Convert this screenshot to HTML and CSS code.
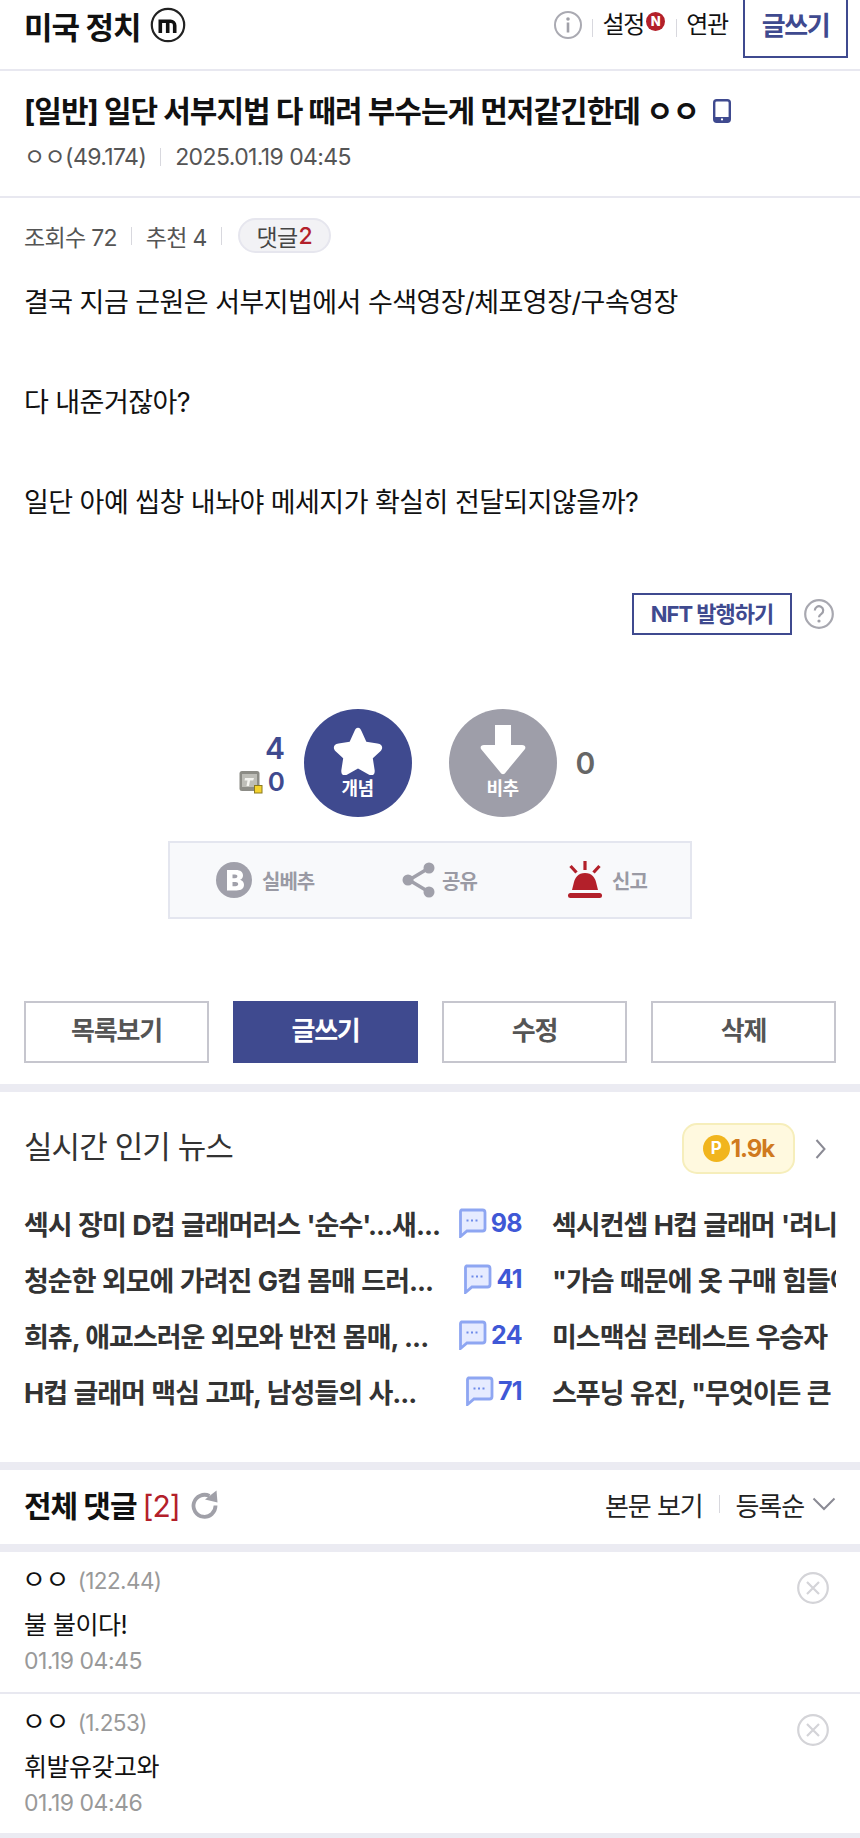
FILE: index.html
```html
<!DOCTYPE html>
<html lang="ko">
<head>
<meta charset="utf-8">
<title>미국 정치</title>
<link rel="stylesheet" href="styles.css">
</head>
<body>
<svg class="defs" aria-hidden="true"><symbol id="bubble" viewBox="0 0 30 30"><path d="M4.500 2h21a2.500 2.500 0 0 1 2.500 2.500v16a2.500 2.500 0 0 1-2.500 2.500H10l-6.500 5.500V4.500a2.500 2.500 0 0 1 1-2.500z" fill="#e6ebff" stroke="#8ea6f2" stroke-width="2.800"/><path d="M9.500 12.500h2M14 12.500h2M18.500 12.500h2" stroke="#6f8bea" stroke-width="2.200"/></symbol></svg>
<header class="top">
  <div class="brand">
    <h1>미국 정치</h1>
    <svg class="m-icon" viewBox="0 0 36 36"><circle cx="18" cy="18" r="16.2" fill="none" stroke="#222" stroke-width="2.200"/><path d="M8.500 12.500h12a6 6 0 0 1 6 6V26h-3.600v-8a2 2 0 0 0-2-2h-1.400v10h-3.600V16h-3.800v10H8.500z" fill="#111"/></svg>
  </div>
  <div class="top-right">
    <svg class="info" viewBox="0 0 28 28"><circle cx="14" cy="14" r="13" fill="none" stroke="#aaaab2" stroke-width="2"/><circle cx="14" cy="8" r="1.8" fill="#a0a0a8"/><rect x="12.700" y="11.500" width="2.600" height="10" fill="#a0a0a8"/></svg>
    <span class="vbar"></span>
    <span class="top-link">설정</span><span class="n-badge">N</span>
    <span class="vbar tight"></span>
    <span class="top-link">연관</span>
    <a class="write-top">글쓰기</a>
  </div>
</header>

<section class="post-head">
  <h2>[일반] 일단 서부지법 다 때려 부수는게 먼저같긴한데 ㅇㅇ
    <svg class="phone" viewBox="0 0 18 24"><rect x="1.200" y="1.200" width="15.600" height="21.600" rx="2.500" fill="none" stroke="#3f4a8f" stroke-width="2.400"/><rect x="1.200" y="18" width="15.600" height="4.800" fill="#3f4a8f"/><circle cx="9" cy="20.400" r="1.100" fill="#fff"/></svg>
  </h2>
  <div class="meta"><span>ㅇㅇ(49.174)</span><i class="sep"></i><span>2025.01.19 04:45</span></div>
</section>

<div class="stats">
  <span>조회수 72</span><i class="sep small"></i><span>추천 4</span><i class="sep small"></i>
  <span class="pill">댓글<b>2</b></span>
</div>

<article class="body-text">
  <p>결국 지금 근원은 서부지법에서 수색영장/체포영장/구속영장</p>
  <p>&nbsp;</p>
  <p>다 내준거잖아?</p>
  <p>&nbsp;</p>
  <p>일단 아예 씹창 내놔야 메세지가 확실히 전달되지않을까?</p>
</article>

<div class="nft-row">
  <a class="nft">NFT 발행하기</a>
  <svg class="help" viewBox="0 0 30 30"><circle cx="15" cy="15" r="13.800" fill="none" stroke="#a8a8b0" stroke-width="2.200"/><path d="M10.800 11.500a4.200 4.200 0 1 1 6.600 3.400c-1.500 1-2.400 1.800-2.400 3.400" fill="none" stroke="#a0a0a8" stroke-width="2.200"/><circle cx="15" cy="22" r="1.600" fill="#a0a0a8"/></svg>
</div>

<div class="vote">
  <div class="vote-left">
    <div class="num-up">4</div>
    <div class="num-fix">
      <svg class="fix-icon" viewBox="0 0 24 24"><rect x="0.500" y="1" width="20" height="20" rx="2.500" fill="#8c8c86"/><rect x="3" y="4" width="15" height="13" fill="#bdbdb7"/><path d="M6 8h9l-.8 2.500H11l-1 5.500H7.500l1-5.500H5.500z" fill="#f4f4f0"/><rect x="15.500" y="15.500" width="7.500" height="7.500" fill="#f4d22e" stroke="#8a7a20" stroke-width="1"/></svg>
      <span>0</span>
    </div>
  </div>
  <button class="circle up">
    <svg viewBox="0 0 56 54"><path d="M28 3c2 0 3 1.500 4 4l5 11 12 2c6 1 6 5 3.500 8l-8.500 8 2 13c.5 5-3 6.500-6.500 4.500L28 47l-11.500 6.500c-3.500 2-7 .5-6.500-4.500l2-13-8.500-8C1 25 1 21 7 20l12-2 5-11c1-2.500 2-4 4-4z" fill="#fff"/></svg>
    <span>개념</span>
  </button>
  <button class="circle down">
    <svg viewBox="0 0 46 50"><path d="M15 0h16v20h11c3 0 4 2 3 4L26 47c-2 3-4 3-6 0L1 24c-1-2 0-4 3-4h11z" fill="#fff"/></svg>
    <span>비추</span>
  </button>
  <div class="vote-right">0</div>
</div>

<div class="actions">
  <div class="action"><svg class="a-b" viewBox="0 0 36 36"><circle cx="18" cy="18" r="18" fill="#a0a0aa"/><path d="M11 8h9c4.500 0 7 2.200 7 5.400 0 2.200-1.200 3.700-3 4.400 2.400.6 4 2.400 4 5 0 3.700-2.800 5.700-7.500 5.700H11zM16.500 12.400v3.800h2.500c1.500 0 2.400-.7 2.400-1.900s-.9-1.900-2.400-1.900zM16.500 20v4.200h3c1.700 0 2.700-.8 2.700-2.100S21.200 20 19.500 20z" fill="#fff" fill-rule="evenodd"/></svg><span>실베추</span></div>
  <div class="action"><svg class="a-s" viewBox="0 0 36 36"><path d="M28 6L8 18l20 12" fill="none" stroke="#a0a0aa" stroke-width="3.500"/><circle cx="28" cy="6" r="5.500" fill="#a0a0aa"/><circle cx="7" cy="18" r="5.500" fill="#a0a0aa"/><circle cx="28" cy="30" r="5.500" fill="#a0a0aa"/></svg><span>공유</span></div>
  <div class="action"><svg class="a-r" viewBox="0 0 36 38"><path d="M18 0v9M3.500 5l6 6.500M32.500 5l-6 6.500" stroke="#b3202a" stroke-width="3.200" fill="none"/><path d="M18 12c7 0 10 5 11 9l2 8H5l2-8c1-4 4-9 11-9z" fill="#b3202a"/><rect x="1" y="32" width="34" height="5" rx="2.500" fill="#b3202a"/></svg><span>신고</span></div>
</div>

<nav class="btns">
  <a class="btn">목록보기</a>
  <a class="btn primary">글쓰기</a>
  <a class="btn">수정</a>
  <a class="btn">삭제</a>
</nav>

<div class="divider"></div>

<section class="news">
  <div class="news-head">
    <h3>실시간 인기 뉴스</h3>
    <div class="news-tools">
      <span class="point"><i>P</i>1.9k</span>
      <svg class="chev" viewBox="0 0 12 22"><path d="M1.500 2l8 9-8 9" fill="none" stroke="#8a8a94" stroke-width="2"/></svg>
    </div>
  </div>
  <ul class="news-grid">
    <li><span class="nt">섹시 장미 D컵 글래머러스 '순수'...새...</span><span class="cm"><svg><use href="#bubble"/></svg>98</span></li>
    <li><span class="nt">섹시컨셉 H컵 글래머 '려니</span></li>
    <li><span class="nt">청순한 외모에 가려진 G컵 몸매 드러...</span><span class="cm"><svg><use href="#bubble"/></svg>41</span></li>
    <li><span class="nt">"가슴 때문에 옷 구매 힘들어</span></li>
    <li><span class="nt">희츄, 애교스러운 외모와 반전 몸매, ...</span><span class="cm"><svg><use href="#bubble"/></svg>24</span></li>
    <li><span class="nt">미스맥심 콘테스트 우승자</span></li>
    <li><span class="nt">H컵 글래머 맥심 고파, 남성들의 사...</span><span class="cm"><svg><use href="#bubble"/></svg>71</span></li>
    <li><span class="nt">스푸닝 유진, "무엇이든 큰</span></li>
  </ul>
</section>

<div class="divider flush"></div>

<section class="cmt-head">
  <div class="cmt-title">
    <h3>전체 댓글 <em>[2]</em></h3>
    <svg class="refresh" viewBox="0 0 30 30"><path d="M20.500 7A11 11 0 1 0 26.500 16.500" fill="none" stroke="#a0a0a8" stroke-width="3.800"/><path d="M16 10.500L27.500 1.500l1 12z" fill="#a0a0a8"/></svg>
  </div>
  <div class="cmt-tools">
    <span>본문 보기</span><i class="sep wide"></i><span>등록순</span>
    <svg class="down-chev" viewBox="0 0 24 14"><path d="M1.500 1.500L12 12 22.500 1.500" fill="none" stroke="#8a8a94" stroke-width="2"/></svg>
  </div>
</section>

<div class="divider flush"></div>

<section class="comment">
  <div class="c-main">
    <div class="c-name">ㅇㅇ <span>(122.44)</span></div>
    <div class="c-text">불 불이다!</div>
    <div class="c-date">01.19 04:45</div>
  </div>
  <svg class="c-del" viewBox="0 0 32 32"><circle cx="16" cy="16" r="14.800" fill="none" stroke="#d4d4d8" stroke-width="2.200"/><path d="M10 10l12 12M22 10L10 22" stroke="#d4d4d8" stroke-width="2.200"/></svg>
</section>
<section class="comment">
  <div class="c-main">
    <div class="c-name">ㅇㅇ <span>(1.253)</span></div>
    <div class="c-text">휘발유갖고와</div>
    <div class="c-date">01.19 04:46</div>
  </div>
  <svg class="c-del" viewBox="0 0 32 32"><circle cx="16" cy="16" r="14.800" fill="none" stroke="#d4d4d8" stroke-width="2.200"/><path d="M10 10l12 12M22 10L10 22" stroke="#d4d4d8" stroke-width="2.200"/></svg>
</section>
<div class="divider flush last"></div>
</body>
</html>
```

FILE: styles.css
```css
* { box-sizing: border-box; }
html, body { margin: 0; padding: 0; background: #fff; }
body {
  width: 860px; height: 1838px; overflow: hidden;
  font-family: Inter, "Noto Sans CJK KR", sans-serif;
  color: #111;
  letter-spacing: -0.5px;
}
h1, h2, h3, p, ul { margin: 0; padding: 0; }
ul { list-style: none; }
i, em { font-style: normal; }
.defs { display: none; }

.top {
  height: 71px; border-bottom: 2px solid #e8e8f0;
  display: flex; justify-content: space-between; padding-left: 24px; padding-right: 12px;
}
.brand { display: flex; align-items: center; gap: 10px; height: 50px; }
.brand h1 { font-size: 31px; font-weight: 700; letter-spacing: -1px; }
.m-icon { width: 36px; height: 36px; }
.top-right { display: flex; align-items: flex-start; height: 58px; }
.info { width: 28px; height: 28px; margin-top: 11px; margin-right: 10px; }
.vbar { width: 1px; height: 18px; background: #d8d8de; margin-top: 19px; margin-right: 9px; }
.vbar.tight { margin-left: 11px; margin-right: 9px; }
.top-link { font-size: 24px; line-height: 50px; letter-spacing: -1.2px; }
.n-badge {
  width: 19px; height: 19px; border-radius: 50%; background: #b3202a; color: #fff;
  font-size: 13px; font-weight: 800; text-align: center; line-height: 19px; margin-top: 12px; margin-left: 2px;
  letter-spacing: 0;
}
.write-top {
  margin-left: 15px; width: 105px; height: 58px; border: 2px solid #3f4a8f; border-top: 0;
  color: #3f4a8f; font-size: 26px; font-weight: 700; text-align: center; line-height: 52px; letter-spacing: -1.5px;
}

.post-head { height: 127px; border-bottom: 2px solid #e8e8f0; padding: 20px 24px 0; }
.post-head h2 { font-size: 30px; line-height: 40px; font-weight: 700; display: flex; align-items: center; gap: 14px; white-space: nowrap; letter-spacing: -1px; }
.phone { width: 18px; height: 24px; }
.meta { display: flex; align-items: center; margin-top: 10px; font-size: 23px; line-height: 32px; color: #555; letter-spacing: -0.6px; }
.sep { display: inline-block; width: 1px; height: 18px; background: #d8d8de; margin: 0 14px; }
.sep.wide { margin: 0 16px; }

.stats { height: 78px; display: flex; align-items: center; padding: 0 24px 3px; font-size: 23px; color: #555; letter-spacing: -0.7px; }
.pill {
  height: 35px; width: 93px; border-radius: 18px; border: 2px solid #e6e6ee; background: #f2f2f5;
  display: flex; align-items: center; justify-content: center; color: #444; margin-left: 2px;
}
.pill b { color: #b3202a; font-weight: 500; margin-left: 1px; }

.body-text { font-size: 27px; line-height: 50px; padding: 2px 24px 0; color: #111; height: 250px; letter-spacing: -0.55px; }

.nft-row { margin-top: 67px; padding-right: 26px; display: flex; justify-content: flex-end; align-items: center; gap: 12px; height: 42px; }
.nft { width: 160px; height: 42px; border: 2px solid #3f4a8f; color: #3f4a8f; font-size: 22px; font-weight: 700; text-align: center; line-height: 38px; letter-spacing: -1px; }
.help { width: 30px; height: 30px; }

.vote { margin-top: 74px; display: grid; grid-template-columns: 1fr 108px 108px 1fr; column-gap: 37px; height: 108px; }
.vote-left { justify-self: end; margin-right: -18px; padding-top: 20px; text-align: right; }
.num-up { font-size: 30px; font-weight: 600; color: #3f4a8f; line-height: 38px; }
.num-fix { display: flex; align-items: center; justify-content: flex-end; gap: 5px; color: #3f4a8f; font-size: 26px; font-weight: 600; line-height: 30px; }
.fix-icon { width: 24px; height: 24px; }
.circle {
  width: 108px; height: 108px; border-radius: 50%; border: 0; padding: 16px 0 0; color: #fff; font-family: inherit;
  display: flex; flex-direction: column; align-items: center; font-size: 18px; font-weight: 700; letter-spacing: -0.5px;
}
.circle svg { width: 56px; height: 50px; display: block; }
.circle span { line-height: 24px; margin-top: 2px; }
.circle.up { background: #3f4a8f; }
.circle.down { background: #9e9ea9; }
.vote-right { align-self: center; margin-left: -18px; font-size: 30px; font-weight: 600; color: #666; }

.actions {
  margin: 24px auto 0; width: 524px; height: 78px; background: #f8f9fb; border: 2px solid #e4e6ef;
  display: flex; align-items: center; padding-left: 46px;
}
.action { display: flex; align-items: center; gap: 10px; font-size: 20px; font-weight: 700; color: #9a9aa4; letter-spacing: -1px; }
.action:nth-child(1) { width: 185px; }
.action:nth-child(2) { width: 166px; gap: 5px; }
.action:nth-child(3) { gap: 9px; }
.a-b { width: 36px; height: 36px; }
.a-s { width: 36px; height: 36px; }
.a-r { width: 36px; height: 38px; }

.btns { margin-top: 82px; padding: 0 24px; display: grid; grid-template-columns: repeat(4, 185px); column-gap: 24px; }
.btn { height: 62px; border: 2px solid #c6c6ce; color: #555; font-size: 26px; font-weight: 700; text-align: center; line-height: 56px; letter-spacing: -1.2px; }
.btn.primary { background: #3f4a8f; border-color: #3f4a8f; color: #fff; }

.divider { height: 8px; margin-top: 21px; background: #ebebf2; }
.divider.flush { margin-top: 0; }
.divider.last { margin-top: -3px; }

.news { padding: 32px 24px 40px; height: 370px; }
.news-head { display: flex; justify-content: space-between; align-items: center; height: 51px; }
.news h3 { font-size: 31px; font-weight: 400; color: #333; letter-spacing: -0.9px; line-height: 44px; margin-top: -5px; }
.news-tools { display: flex; align-items: center; gap: 20px; padding-right: 9px; margin-top: -2px; }
.point {
  width: 113px; height: 51px; border-radius: 15px; background: #fff9df; border: 2px solid #f6eebb;
  display: flex; align-items: center; justify-content: center; gap: 1px;
  color: #d07a1e; font-size: 24px; font-weight: 700; letter-spacing: -1px;
}
.point i { width: 27px; height: 27px; border-radius: 50%; background: #f1b51d; color: #fff; font-size: 17px; text-align: center; line-height: 27px; font-weight: 700; letter-spacing: 0; }
.chev { width: 12px; height: 22px; }
.news-grid { margin-top: 20px; display: grid; grid-template-columns: 498px 284px; column-gap: 30px; grid-auto-rows: 56px; }
.news-grid li { display: flex; justify-content: space-between; align-items: center; overflow: hidden; white-space: nowrap; }
.nt { font-size: 27px; font-weight: 700; color: #333; letter-spacing: -1px; word-spacing: 1px; }
.cm { display: flex; align-items: center; gap: 4px; color: #3f58d6; font-size: 25px; font-weight: 700; letter-spacing: -0.6px; }
.cm svg { width: 30px; height: 30px; }

.cmt-head { height: 74px; padding: 0 24px 6px; display: flex; justify-content: space-between; align-items: center; }
.cmt-title { display: flex; align-items: center; gap: 9px; }
.cmt-title h3 { font-size: 30px; font-weight: 700; letter-spacing: -1px; }
.cmt-title em { color: #b3202a; font-weight: 400; }
.refresh { width: 30px; height: 30px; }
.cmt-tools { display: flex; align-items: center; font-size: 26px; letter-spacing: -1.1px; color: #222; }
.down-chev { width: 24px; height: 14px; margin-left: 8px; }

.comment { height: 142px; border-bottom: 2px solid #e8e8f0; padding: 12px 24px 0; display: flex; justify-content: space-between; }
.comment + .comment { border-bottom: 0; }
.c-name { font-size: 26px; line-height: 32px; color: #111; margin-left: -2px; }
.c-name span { color: #999; margin-left: 2px; letter-spacing: -0.6px; font-size: 22.500px; }
.c-text { margin-top: 8px; font-size: 25px; line-height: 40px; color: #111; }
.c-date { font-size: 23px; line-height: 30px; color: #999; margin-top: 1px; letter-spacing: -0.5px; }
.c-del { width: 32px; height: 32px; margin-top: 8px; margin-right: 7px; }
```
